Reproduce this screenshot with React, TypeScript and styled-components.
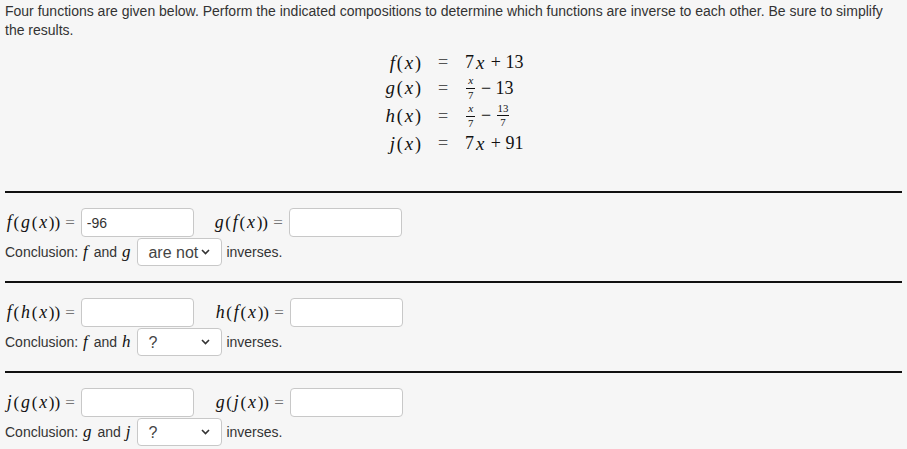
import React from 'react';
import styled, { createGlobalStyle } from 'styled-components';

const Global = createGlobalStyle`
  html, body { margin: 0; padding: 0; background: #f6f6f6; }
  body { font-family: "Liberation Sans", Arial, sans-serif; color: #333; }
`;

const Page = styled.div`
  width: 907px;
  box-sizing: border-box;
  padding: 2px 5px 0;
`;

const Intro = styled.p`
  margin: 0;
  font-size: 14px;
  line-height: 19px;
`;

const Display = styled.div`
  display: grid;
  grid-template-columns: auto auto auto;
  grid-template-rows: 25px 26px 30px 25px;
  column-gap: 17px;
  justify-content: center;
  align-items: center;
  margin-top: 10px;
  margin-bottom: 35px;
  font-family: "Liberation Serif", serif;
  font-size: 18px;
  color: #111;
  white-space: nowrap;
`;

const Lhs = styled.div`
  justify-self: end;
`;

const EqCell = styled.div`
  color: #555;
`;

const Rhs = styled.div`
  justify-self: start;
  display: flex;
  align-items: center;
`;

const Mi = styled.i`
  font-family: "Liberation Serif", serif;
  font-style: italic;
  font-size: 1.05em;
  margin: 0 0.1em;
`;

const Op = styled.span`
  margin: 0 0.25em;
`;

const Frac = styled.span`
  display: inline-flex;
  flex-direction: column;
  align-items: center;
  font-size: 0.6em;
  line-height: 1.05;
  vertical-align: middle;
  margin: 0 1px;
`;

const Num = styled.span`
  border-bottom: 1px solid #111;
  padding: 0 1px 1px;
  align-self: stretch;
  text-align: center;
`;

const Den = styled.span`
  padding-top: 1px;
`;

const Section = styled.section`
  border-top: 2px solid #111;
  padding: 15px 0 15px;
`;

const QuestionRow = styled.div`
  display: flex;
  align-items: center;
  height: 29px;
`;

const MathLabel = styled.span<{ $gap?: number }>`
  font-family: "Liberation Serif", serif;
  font-size: 17px;
  color: #111;
  margin-left: ${(p) => p.$gap ?? 0}px;
  margin-right: 6px;
  white-space: nowrap;
`;

const LabelEq = styled.span`
  color: #777;
  margin-left: 0.3em;
`;

const AnswerInput = styled.input`
  box-sizing: border-box;
  width: 113px;
  height: 29px;
  border: 1px solid #c8c8c8;
  border-radius: 4px;
  background: #fff;
  padding: 0 5px;
  font-family: "Liberation Sans", Arial, sans-serif;
  font-size: 14px;
  color: #333;
  outline: none;
`;

const ConclusionRow = styled.div`
  display: flex;
  align-items: center;
  margin-top: 1px;
  height: 28px;
  font-size: 14px;
  white-space: pre;
`;

const InlineVar = styled.i`
  font-family: "Liberation Serif", serif;
  font-style: italic;
  font-size: 17px;
  color: #111;
  margin: 0 2px 0 1px;
`;

const SelectWrap = styled.span`
  position: relative;
  display: inline-block;
  margin: 0 4px 0 5px;
`;

const Choice = styled.select`
  appearance: none;
  -webkit-appearance: none;
  box-sizing: border-box;
  width: 85px;
  height: 28px;
  border: 1px solid #c8c8c8;
  border-radius: 4px;
  background: #fff;
  padding: 0 0 0 10px;
  font-family: "Liberation Sans", Arial, sans-serif;
  font-size: 16px;
  color: #444;
  outline: none;
`;

const Chevron = styled.svg`
  position: absolute;
  right: 12px;
  top: 50%;
  margin-top: -3px;
  pointer-events: none;
`;

type Part = React.ReactNode;

function Select({ value }: { value: string }) {
  return (
    <SelectWrap>
      <Choice defaultValue={value}>
        <option value="?">?</option>
        <option value="are">are</option>
        <option value="are not">are not</option>
      </Choice>
      <Chevron width="9" height="6" viewBox="0 0 9 6">
        <polyline points="1,1 4.5,4.5 8,1" fill="none" stroke="#333" strokeWidth="1.6" />
      </Chevron>
    </SelectWrap>
  );
}

function comp(outer: string, inner: string): Part {
  return (
    <>
      <Mi>{outer}</Mi>(<Mi>{inner}</Mi>(<Mi>x</Mi>))
      <LabelEq>=</LabelEq>
    </>
  );
}

function Block({
  a,
  b,
  pair,
  value,
  select,
  gap,
}: {
  a: string;
  b: string;
  pair: [string, string];
  value?: string;
  select: string;
  gap: number;
}) {
  return (
    <Section>
      <QuestionRow>
        <MathLabel>{comp(a, b)}</MathLabel>
        <AnswerInput defaultValue={value ?? ''} />
        <MathLabel $gap={gap}>{comp(b, a)}</MathLabel>
        <AnswerInput />
      </QuestionRow>
      <ConclusionRow>
        {'Conclusion: '}
        <InlineVar>{pair[0]}</InlineVar>
        {' and '}
        <InlineVar>{pair[1]}</InlineVar>
        <Select value={select} />
        {'inverses.'}
      </ConclusionRow>
    </Section>
  );
}

export default function App() {
  return (
    <Page>
      <Global />
      <Intro>
        Four functions are given below. Perform the indicated compositions to determine which
        functions are inverse to each other. Be sure to simplify the results.
      </Intro>
      <Display>
        <Lhs>
          <Mi>f</Mi>(<Mi>x</Mi>)
        </Lhs>
        <EqCell>=</EqCell>
        <Rhs>
          7<Mi>x</Mi>
          <Op>+</Op>13
        </Rhs>

        <Lhs>
          <Mi>g</Mi>(<Mi>x</Mi>)
        </Lhs>
        <EqCell>=</EqCell>
        <Rhs>
          <Frac>
            <Num>
              <Mi>x</Mi>
            </Num>
            <Den>7</Den>
          </Frac>
          <Op>−</Op>13
        </Rhs>

        <Lhs>
          <Mi>h</Mi>(<Mi>x</Mi>)
        </Lhs>
        <EqCell>=</EqCell>
        <Rhs>
          <Frac>
            <Num>
              <Mi>x</Mi>
            </Num>
            <Den>7</Den>
          </Frac>
          <Op>−</Op>
          <Frac>
            <Num>13</Num>
            <Den>7</Den>
          </Frac>
        </Rhs>

        <Lhs>
          <Mi>j</Mi>(<Mi>x</Mi>)
        </Lhs>
        <EqCell>=</EqCell>
        <Rhs>
          7<Mi>x</Mi>
          <Op>+</Op>91
        </Rhs>
      </Display>
      <Block a="f" b="g" pair={['f', 'g']} value="-96" select="are not" gap={19} />
      <Block a="f" b="h" pair={['f', 'h']} select="?" gap={20} />
      <Block a="j" b="g" pair={['g', 'j']} select="?" gap={20} />
    </Page>
  );
}
